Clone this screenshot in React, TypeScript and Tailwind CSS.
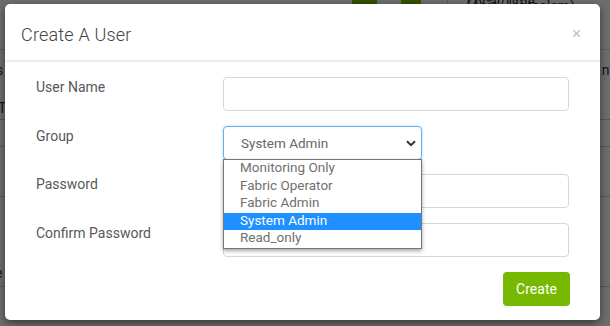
import React from 'react';

const font = { fontFamily: 'Roboto, "Liberation Sans", sans-serif' };

const groups = ['Monitoring Only', 'Fabric Operator', 'Fabric Admin', 'System Admin', 'Read_only'];

const BackgroundPage = () => (
  <div className="relative h-[326px] w-[610px] overflow-hidden bg-white text-[#333]">
    {/* top toolbar */}
    <div className="flex h-[50px] items-start border-b border-[#ddd]">
      <div className="ml-[352px] h-[12px] w-[31px] rounded-b bg-[#76b900]" />
      <div className="ml-[24px] h-[12px] w-[26px] rounded-b bg-[#76b900]" />
      <div className="ml-[26px] h-[50px] border-l border-[#ccc] pl-[18px] text-[14px] leading-[4px]">Local Time (Asia/Jerusalem)</div>
    </div>
    {/* table-ish rows */}
    <div className="flex h-[40px] items-center justify-between text-[14px]">
      <span className="-ml-[4px]">s</span>
      <span className="-mr-[4px]">nt</span>
    </div>
    <div className="flex h-[30px] items-end border-b border-[#ccc] text-[14px]">
      <span className="-ml-[2px]">T</span>
    </div>
    <div className="h-[27px] border-b border-[#ccc]" />
    <div className="h-[50px] border-b border-[#ccc]" />
    <div className="flex h-[90px] items-end border-b border-[#ccc] pb-[2px] text-[14px]">
      <span className="-ml-[5px]">e</span>
    </div>
    <div className="ml-[238px] h-[30px] border-l border-[#ccc]" />
  </div>
);

const Chevron = () => (
  <svg width="10" height="7" viewBox="0 0 10 7" className="shrink-0">
    <path d="M1 1.2 L5 5.2 L9 1.2" fill="none" stroke="#333" strokeWidth="2" />
  </svg>
);

const Field = ({ label, children }: { label: string; children: React.ReactNode }) => (
  <div className="flex">
    <label className="w-[187px] pt-[1px] text-[14px] leading-[18px] text-[#585858]">{label}</label>
    <div className="relative w-[346px]">{children}</div>
  </div>
);

export default function App() {
  return (
    <div className="relative h-[326px] w-[610px] overflow-hidden" style={font}>
      <BackgroundPage />
      <div className="absolute inset-0 bg-black/[0.57]">
        <div className="ml-[5px] mt-[4px] h-[316px] w-[595px] rounded-[5px] bg-white shadow-[0_3px_9px_rgba(0,0,0,0.5)]">
          {/* header */}
          <div className="flex h-[58px] items-center justify-between border-b-2 border-[#ececec] pl-[16px] pr-[19px]">
            <h4 className="pt-[4px] text-[18px] font-light tracking-[0.2px] text-[#444]">Create A User</h4>
            <span className="pt-[2px] text-[17px] leading-none text-[#c4c4c4]">×</span>
          </div>

          {/* body */}
          <div className="flex flex-col pl-[31px] pr-[30px] pt-[15px]">
            <Field label="User Name">
              <div className="h-[34px] rounded-[4px] border border-[#d6d6d6]" />
            </Field>

            <div className="mt-[15px]">
              <Field label="Group">
                <div className="flex h-[34px] w-[199px] items-center justify-between rounded-[4px] border border-[#66afe9] pl-[17px] pr-[5px] text-[13.5px] text-[#666] shadow-[0_0_3px_rgba(102,175,233,0.5)]">
                  <span>System Admin</span>
                  <Chevron />
                </div>
                {/* open native list */}
                <div className="absolute left-0 top-[33px] z-10 w-[199px] border border-[#767676] bg-white text-[13.5px] leading-[17.6px] text-[#707070] shadow-[0_2px_4px_rgba(0,0,0,0.35)]">
                  {groups.map((g) => (
                    <div
                      key={g}
                      className={g === 'System Admin' ? 'bg-[#1e90ff] pl-[16px] text-white' : 'pl-[16px]'}
                    >
                      <span className="relative -top-[1px]">{g}</span>
                    </div>
                  ))}
                </div>
              </Field>
            </div>

            <div className="mt-[14px]">
              <Field label="Password">
                <div className="h-[34px] rounded-[4px] border border-[#d6d6d6]" />
              </Field>
            </div>

            <div className="mt-[15px]">
              <Field label="Confirm Password">
                <div className="h-[34px] rounded-[4px] border border-[#d6d6d6]" />
              </Field>
            </div>

            <div className="mt-[15px] flex justify-end">
              <button className="h-[34px] w-[67px] rounded-[4px] bg-[#76b900] text-[14px] text-white">Create</button>
            </div>
          </div>
        </div>
      </div>
    </div>
  );
}
